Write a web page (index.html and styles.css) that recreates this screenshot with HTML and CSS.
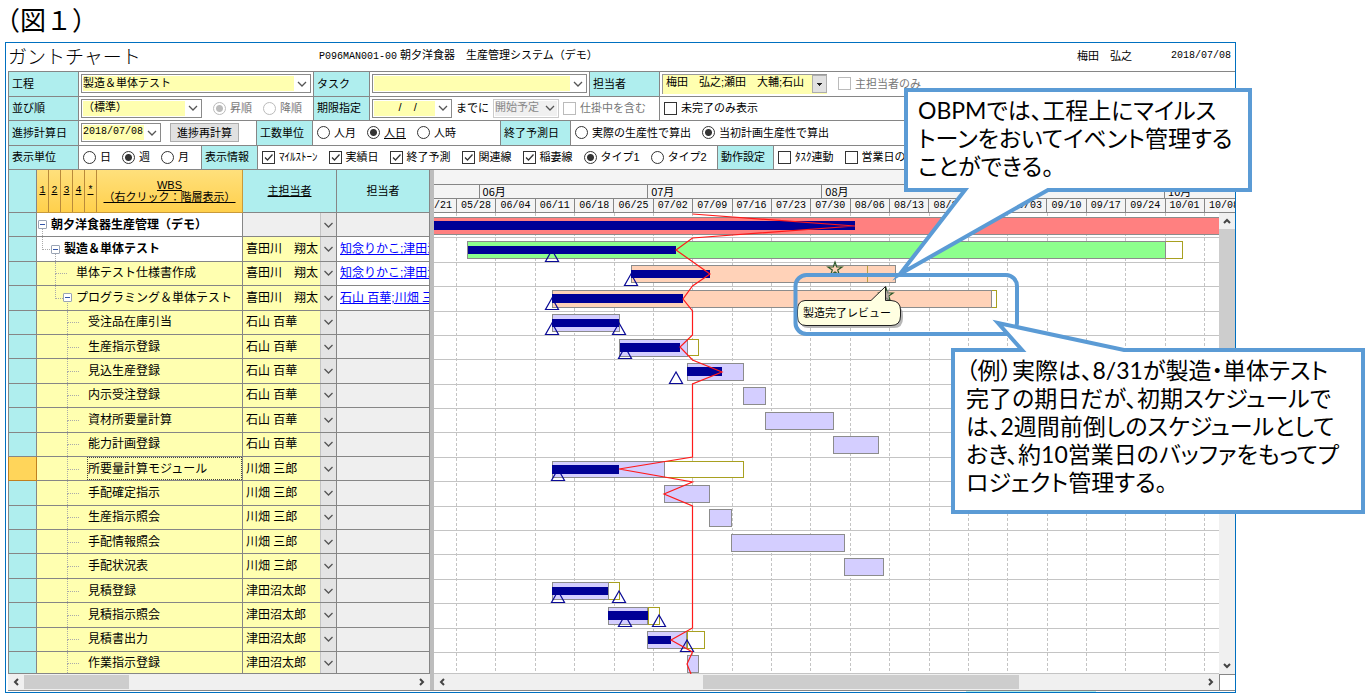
FILE: index.html
```html
<!DOCTYPE html>
<html lang="ja">
<head>
<meta charset="utf-8">
<title>ガントチャート</title>
<link rel="stylesheet" href="styles.css">
</head>
<body>
<h1 class="figure-title">（図１）</h1>
<main class="window">
  <header class="titlebar">
    <h2 class="screen-name">ガントチャート</h2>
    <p class="system"><span class="code">P096MAN001-00</span> 朝夕洋食器　生産管理システム（デモ）</p>
    <p class="user">梅田　弘之</p>
    <time class="today code">2018/07/08</time>
  </header>

  <form class="filters">
    <div class="frow">
      <label class="cap w-first" for="process">工程</label>
      <div class="cell w-process"><select id="process" class="combo grow"><option>製造＆単体テスト</option></select></div>
      <label class="cap w-mid" for="task">タスク</label>
      <div class="cell w-task"><select id="task" class="combo grow"><option></option></select></div>
      <label class="cap w-first" for="staff">担当者</label>
      <div class="cell last">
        <span class="staff"><input id="staff" type="text" value="梅田　弘之;瀬田　大輔;石山"><button type="button" class="drop" aria-label="担当者を選択"></button></span>
        <label class="opt off"><input type="checkbox" disabled>主担当者のみ</label>
      </div>
    </div>
    <div class="frow">
      <label class="cap w-first" for="order">並び順</label>
      <div class="cell w-process">
        <select id="order" class="combo w-order"><option>（標準）</option></select>
        <label class="opt off"><input type="radio" name="dir" checked disabled>昇順</label>
        <label class="opt off"><input type="radio" name="dir" disabled>降順</label>
      </div>
      <label class="cap w-mid" for="limit">期限指定</label>
      <div class="cell w-limit">
        <select id="limit" class="combo w-date"><option>&nbsp;&nbsp;&nbsp;&nbsp;&nbsp;&nbsp;&nbsp;&nbsp;/&nbsp;&nbsp;&nbsp;&nbsp;/</option></select>
        <span class="until">までに</span>
        <select class="combo disabled" aria-label="予定" disabled><option>開始予定</option></select>
        <label class="opt off"><input type="checkbox" disabled>仕掛中を含む</label>
      </div>
      <div class="cell last"><label class="opt"><input type="checkbox">未完了のみ表示</label></div>
    </div>
    <div class="frow">
      <label class="cap w-first" for="pdate">進捗計算日</label>
      <div class="cell w-pdate">
        <select id="pdate" class="combo w-date code"><option>2018/07/08</option></select>
        <button type="button" class="recalc">進捗再計算</button>
      </div>
      <span class="cap w-mid">工数単位</span>
      <div class="cell w-unit">
        <label class="opt"><input type="radio" name="unit">人月</label>
        <label class="opt"><input type="radio" name="unit" checked><u>人日</u></label>
        <label class="opt"><input type="radio" name="unit">人時</label>
      </div>
      <span class="cap w-first">終了予測日</span>
      <div class="cell last">
        <label class="opt"><input type="radio" name="fc">実際の生産性で算出</label>
        <label class="opt"><input type="radio" name="fc" checked>当初計画生産性で算出</label>
      </div>
    </div>
    <div class="frow">
      <span class="cap w-first">表示単位</span>
      <div class="cell w-scale">
        <label class="opt"><input type="radio" name="scale">日</label>
        <label class="opt"><input type="radio" name="scale" checked>週</label>
        <label class="opt"><input type="radio" name="scale">月</label>
      </div>
      <span class="cap w-mid">表示情報</span>
      <div class="cell w-info">
        <label class="opt"><input type="checkbox" checked>ﾏｲﾙｽﾄｰﾝ</label>
        <label class="opt"><input type="checkbox" checked>実績日</label>
        <label class="opt"><input type="checkbox" checked>終了予測</label>
        <label class="opt"><input type="checkbox" checked>関連線</label>
        <label class="opt"><input type="checkbox" checked>稲妻線</label>
        <label class="opt"><input type="radio" name="type" checked>タイプ1</label>
        <label class="opt"><input type="radio" name="type">タイプ2</label>
      </div>
      <span class="cap w-mid">動作設定</span>
      <div class="cell last">
        <label class="opt"><input type="checkbox">ﾀｽｸ連動</label>
        <label class="opt"><input type="checkbox">営業日のみ</label>
      </div>
    </div>
  </form>

  <div class="gantt">
    <section class="pane">
      <table class="wbs">
        <thead>
          <tr>
            <th></th>
            <th class="gold levels"><a href="#">1</a><a href="#">2</a><a href="#">3</a><a href="#">4</a><a href="#">*</a><a href="#" class="wide">WBS<br>（右クリック：階層表示）</a></th>
            <th><a href="#">主担当者</a></th>
            <th>担当者</th>
          </tr>
        </thead>
        <tbody>
          <tr class="root"><td></td><td class="name l0"><button class="toggle" aria-label="折りたたむ"></button>朝夕洋食器生産管理（デモ）</td><td class="owner none"><button class="pick" aria-label="選択"></button></td><td></td></tr>
          <tr class="root named"><td></td><td class="name l1"><button class="toggle" aria-label="折りたたむ"></button>製造＆単体テスト</td><td class="owner">喜田川　翔太<button class="pick" aria-label="選択"></button></td><td><a href="#">知念りかこ;津田沼</a></td></tr>
          <tr class="named"><td></td><td class="name l2">単体テスト仕様書作成</td><td class="owner">喜田川　翔太<button class="pick" aria-label="選択"></button></td><td><a href="#">知念りかこ;津田沼</a></td></tr>
          <tr class="named"><td></td><td class="name l2p"><button class="toggle" aria-label="折りたたむ"></button>プログラミング＆単体テスト</td><td class="owner">喜田川　翔太<button class="pick" aria-label="選択"></button></td><td><a href="#">石山 百華;川畑 三</a></td></tr>
          <tr><td></td><td class="name l3">受注品在庫引当</td><td class="owner">石山 百華<button class="pick" aria-label="選択"></button></td><td></td></tr>
          <tr><td></td><td class="name l3">生産指示登録</td><td class="owner">石山 百華<button class="pick" aria-label="選択"></button></td><td></td></tr>
          <tr><td></td><td class="name l3">見込生産登録</td><td class="owner">石山 百華<button class="pick" aria-label="選択"></button></td><td></td></tr>
          <tr><td></td><td class="name l3">内示受注登録</td><td class="owner">石山 百華<button class="pick" aria-label="選択"></button></td><td></td></tr>
          <tr><td></td><td class="name l3">資材所要量計算</td><td class="owner">石山 百華<button class="pick" aria-label="選択"></button></td><td></td></tr>
          <tr><td></td><td class="name l3">能力計画登録</td><td class="owner">石山 百華<button class="pick" aria-label="選択"></button></td><td></td></tr>
          <tr class="current"><td></td><td class="name l3"><span class="focus">所要量計算モジュール</span></td><td class="owner">川畑 三郎<button class="pick" aria-label="選択"></button></td><td></td></tr>
          <tr><td></td><td class="name l3">手配確定指示</td><td class="owner">川畑 三郎<button class="pick" aria-label="選択"></button></td><td></td></tr>
          <tr><td></td><td class="name l3">生産指示照会</td><td class="owner">川畑 三郎<button class="pick" aria-label="選択"></button></td><td></td></tr>
          <tr><td></td><td class="name l3">手配情報照会</td><td class="owner">川畑 三郎<button class="pick" aria-label="選択"></button></td><td></td></tr>
          <tr><td></td><td class="name l3">手配状況表</td><td class="owner">川畑 三郎<button class="pick" aria-label="選択"></button></td><td></td></tr>
          <tr><td></td><td class="name l3">見積登録</td><td class="owner">津田沼太郎<button class="pick" aria-label="選択"></button></td><td></td></tr>
          <tr><td></td><td class="name l3">見積指示照会</td><td class="owner">津田沼太郎<button class="pick" aria-label="選択"></button></td><td></td></tr>
          <tr><td></td><td class="name l3">見積書出力</td><td class="owner">津田沼太郎<button class="pick" aria-label="選択"></button></td><td></td></tr>
          <tr><td></td><td class="name l3">作業指示登録</td><td class="owner">津田沼太郎<button class="pick" aria-label="選択"></button></td><td></td></tr>
        </tbody>
      </table>
      <div class="hscroll">
        <svg class="arrow" viewBox="0 0 16 16"><path d="M10 5L7 8L10 11"/></svg>
        <div class="track"><div class="thumb thumb-left"></div></div>
        <svg class="arrow" viewBox="0 0 16 16"><path d="M6 5L9 8L6 11"/></svg>
      </div>
    </section>

    <section class="chart">
      <div class="timeline">
        <div class="blank"></div>
        <div class="months"><span></span><span>06月</span><span>07月</span><span>08月</span><span>09月</span><span>10月</span></div>
        <div class="weeks"><span class="first">/21</span><span>05/28</span><span>06/04</span><span>06/11</span><span>06/18</span><span>06/25</span><span>07/02</span><span>07/09</span><span>07/16</span><span>07/23</span><span>07/30</span><span>08/06</span><span>08/13</span><span>08/20</span><span>08/27</span><span>09/03</span><span>09/10</span><span>09/17</span><span>09/24</span><span>10/01</span><span>10/08</span></div>
      </div>
      <div class="plot">
        <svg class="bars" viewBox="434 212 785 461" preserveAspectRatio="none">
          <defs>
            <path id="tri" d="M0 12L-6.5 23.5H6.5Z" fill="none" stroke="#0a0a96" stroke-width="1.2"/>
            <path id="star" d="M0 -7L1.7 -2H7L2.7 1L4.4 6L0 3L-4.4 6L-2.7 1L-7 -2H-1.7Z" fill="none" stroke="#2c5a2c" stroke-width="1.2"/>
          </defs>
          <path class="week-lines" d="M456.5 212V673M495.5 212V673M535.5 212V673M574.5 212V673M614.5 212V673M653.5 212V673M692.5 212V673M732.5 212V673M771.5 212V673M810.5 212V673M850.5 212V673M889.5 212V673M929.5 212V673M968.5 212V673M1007.5 212V673M1047.5 212V673M1086.5 212V673M1125.5 212V673M1165.5 212V673M1204.5 212V673"/>
          <path class="row-lines" d="M434 236.5H1219M434 261.5H1219M434 285.5H1219M434 310.5H1219M434 334.5H1219M434 358.5H1219M434 383.5H1219M434 407.5H1219M434 431.5H1219M434 456.5H1219M434 480.5H1219M434 505.5H1219M434 529.5H1219M434 553.5H1219M434 578.5H1219M434 602.5H1219M434 627.5H1219M434 651.5H1219M434 672.5H1219"/>
          <g class="fc">
            <rect x="1165.5" y="240.5" width="17" height="17"/><rect x="991.5" y="289.5" width="5" height="17"/>
            <rect x="687.5" y="338.5" width="11" height="16"/><rect x="664.5" y="460.5" width="79" height="16"/>
            <rect x="608.5" y="581.5" width="11" height="17"/><rect x="648.5" y="606.5" width="11" height="17"/>
            <rect x="687.5" y="630.5" width="17" height="17"/>
          </g>
          <rect class="bar red" x="430.5" y="216.5" width="800" height="17"/>
          <rect class="bar green" x="467.5" y="240.5" width="698" height="17"/>
          <g class="bar peach"><rect x="631.5" y="264.5" width="264" height="17"/><rect x="552.5" y="289.5" width="439" height="17"/></g>
          <path d="M867.5 265V281" stroke="#b8a040"/>
          <g class="bar lav">
            <rect x="552.5" y="313.5" width="67" height="17"/><rect x="619.5" y="338.5" width="68" height="17"/>
            <rect x="687.5" y="362.5" width="56" height="17"/><rect x="743.5" y="386.5" width="22" height="17"/>
            <rect x="765.5" y="411.5" width="68" height="17"/><rect x="833.5" y="435.5" width="45" height="17"/>
            <rect x="552.5" y="460.5" width="112" height="16"/><rect x="664.5" y="484.5" width="45" height="17"/>
            <rect x="709.5" y="508.5" width="22" height="17"/><rect x="731.5" y="533.5" width="113" height="17"/>
            <rect x="844.5" y="557.5" width="39" height="17"/><rect x="552.5" y="581.5" width="56" height="17"/>
            <rect x="608.5" y="606.5" width="39" height="17"/><rect x="647.5" y="630.5" width="39" height="17"/>
            <rect x="687.5" y="654.5" width="11" height="17"/>
          </g>
          <g>
            <use href="#tri" x="552" y="237"/><use href="#tri" x="631" y="261"/><use href="#tri" x="552" y="285"/>
            <use href="#tri" x="552" y="310"/><use href="#tri" x="619" y="310"/><use href="#tri" x="625" y="334"/>
            <use href="#tri" x="676" y="359"/><use href="#tri" x="558" y="456"/><use href="#tri" x="558" y="578"/>
            <use href="#tri" x="619" y="578"/><use href="#tri" x="625" y="602"/><use href="#tri" x="659" y="602"/>
            <use href="#tri" x="687" y="627"/>
          </g>
          <g class="done">
            <rect x="434" y="220" width="421" height="9"/><rect x="468" y="245" width="208" height="8"/>
            <rect x="631" y="269" width="79" height="8"/><rect x="552" y="293" width="131" height="9"/>
            <rect x="552" y="318" width="67" height="8"/><rect x="620" y="342" width="60" height="9"/>
            <rect x="687" y="366" width="35" height="9"/><rect x="552" y="464" width="67" height="9"/>
            <rect x="552" y="586" width="56" height="8"/><rect x="608" y="610" width="40" height="9"/>
            <rect x="648" y="635" width="23" height="8"/>
          </g>
          <use href="#star" x="835" y="268"/><use href="#star" x="886" y="294"/>
          <path class="lightning" d="M692.5 213L855 225L692.5 237L676 249L710 273L692.5 285L683 298L692.5 310V334L680 346L692.5 359L722 371L692.5 383V456L619 468L692.5 481L664 493L692.5 505V627L671 639L692.5 651L687 663L691 673"/>
        </svg>
        <div class="vscroll">
          <svg class="arrow" viewBox="0 0 16 16"><path d="M5 10L8 7L11 10"/></svg>
          <div class="vtrack"><div class="vthumb"></div></div>
          <svg class="arrow" viewBox="0 0 16 16"><path d="M5 6L8 9L11 6"/></svg>
        </div>
      </div>
      <div class="hscroll">
        <svg class="arrow" viewBox="0 0 16 16"><path d="M10 5L7 8L10 11"/></svg>
        <div class="track"><div class="thumb thumb-right"></div></div>
        <svg class="arrow" viewBox="0 0 16 16"><path d="M6 5L9 8L6 11"/></svg>
        <div class="corner"></div>
      </div>
    </section>
  </div>
  <div class="status"><span></span></div>
</main>

<div class="notes">
  <svg class="shapes" width="1365" height="694" viewBox="0 0 1365 694">
    <path d="M807 303.500H872L888 288V303.500H892Q902 304 902 314V317Q902 327 893 327H807Q799 327 799 317V312Q799 304 807 303.500Z" fill="#999" opacity=".7" transform="translate(1 1)"/>
    <path d="M805 300.500H871L885.500 286.500V300.500H891Q900.500 301 900.500 310V316Q900.500 325.500 891 325.500H806Q797.500 325.500 797.500 316V310Q797.500 301 805 300.500Z" fill="#ffffe1" stroke="#222"/>
    <g stroke="#5b9bd5" stroke-width="4" stroke-miterlimit="12">
      <rect x="795.500" y="275" width="221.500" height="59" rx="11" fill="none"/>
      <path d="M906 90H1250V190H1048L900 274L965 190H906Z" fill="#fff"/>
      <path d="M953 350H1022L998 323L1124 350H1363V512H953Z" fill="#fff"/>
    </g>
  </svg>
  <p class="tip">製造完了レビュー</p>
  <p class="note note-a">OBPMでは、工程上にマイルス<br>トーンをおいてイベント管理する<br>ことができる。</p>
  <p class="note note-b">（例）実際は、8/31が製造・単体テスト<br>完了の期日だが、初期スケジュールで<br>は、2週間前倒しのスケジュールとして<br>おき、約10営業日のバッファをもってプ<br>ロジェクト管理する。</p>
</div>
</body>
</html>
```
FILE: styles.css
```css
* { box-sizing: border-box; }

:root {
  --line: #868686;
  --cyan: #afeeee;
  --yellow: #ffffb0;
  --jp: "Noto Sans CJK JP", sans-serif;
  --chevron: url("data:image/svg+xml,%3Csvg xmlns='http://www.w3.org/2000/svg' width='16' height='16'%3E%3Cpath d='M4 6L8 10L12 6' fill='none' stroke='%23555' stroke-width='1.3'/%3E%3C/svg%3E");
}

body {
  margin: 0;
  height: 100vh;
  min-height: 600px;
  display: flex;
  flex-direction: column;
  position: relative;
  background: #fff;
  color: #000;
  font-family: "Liberation Sans", var(--jp);
  font-size: 11px;
  line-height: 16px;
}

h1, h2, p { margin: 0; font-weight: 400; }
a { color: inherit; }
button, input, select { font: inherit; color: inherit; margin: 0; padding: 0; border-radius: 0; }
.code { font-family: "Liberation Mono", monospace; font-size: 10px; }

.figure-title {
  height: 42px;
  flex: none;
  padding-left: 7px;
  font: 26px/38px var(--jp);
  font-feature-settings: "halt";
}

.window {
  flex: 1;
  min-height: 0;
  display: flex;
  flex-direction: column;
  margin: 0 129px 1px 5px;
  padding-left: 2px;
  border: 1px solid #0070c0;
}

/* title bar */
.titlebar { height: 28px; flex: none; display: flex; align-items: center; padding: 0 4px 3px 0; }
.screen-name { width: 311px; font: 300 19px/22px var(--jp); }
.system { flex: 1; }
.user { width: 94px; }
.today { width: 60px; }

/* filter form */
.filters { height: 98px; flex: none; display: grid; grid-template-rows: repeat(4, 1fr); border-left: 1px solid var(--line); }
.frow { display: flex; min-height: 0; border-top: 1px solid var(--line); white-space: nowrap; }
.cap { flex: none; display: flex; align-items: center; padding-left: 3px; background: var(--cyan); border-right: 1px solid var(--line); }
.cell { flex: none; display: flex; align-items: center; gap: 11px; padding: 0 2px 0 4px; border-right: 1px solid var(--line); overflow: hidden; }
.cell:has(> .combo:first-child), .cell:has(> .staff) { padding-left: 2px; }
.cell.last { flex: 1; border-right: 0; }
.w-first { width: 70px; }
.w-mid { width: 56px; }
.w-process { width: 235px; }
.w-task { width: 220px; }
.w-limit { width: 290px; gap: 4px; }
.w-pdate { width: 178px; gap: 9px; }
.w-unit { width: 188px; }
.w-scale { width: 123px; }
.w-info { width: 460px; }

.opt { display: flex; align-items: center; gap: 4px; }
.opt.off { color: #777; }
.opt input { appearance: none; width: 13px; height: 13px; border: 1px solid #333; background: #fff; flex: none; }
.opt input[type="radio"] { border-radius: 50%; }
.opt input[type="radio"]:checked { background: radial-gradient(circle, #333 0 3px, #fff 4px); }
.opt input[type="checkbox"]:checked {
  background: url("data:image/svg+xml,%3Csvg xmlns='http://www.w3.org/2000/svg' width='11' height='11'%3E%3Cpath d='M2 5.500L4.500 8L9.500 2.500' fill='none' stroke='%23333' stroke-width='1.300'/%3E%3C/svg%3E") center no-repeat;
}
.opt input:disabled { border-color: #bbb; }
.opt input[type="radio"]:disabled:checked { background: radial-gradient(circle, #bbb 0 3px, #fff 4px); }

.combo {
  appearance: none;
  height: 19px;
  padding: 0 16px 2px 1px;
  line-height: 14px;
  border: 1px solid #8a8a8a;
  background: var(--chevron) right 0 center no-repeat, linear-gradient(90deg, transparent calc(100% - 16px), #fff 0), var(--yellow);
  box-shadow: inset 0 0 0 1px #fff;
}
.combo.grow { width: 100%; }
.w-order { width: 121px; }
.w-date { width: 80px; }
.combo.disabled { width: 66px; color: #888; border-color: #ccc; background: var(--chevron) right 0 center no-repeat, #f0f0f0; opacity: 1; }
.recalc { width: 69px; height: 19px; line-height: 16px; background: #e1e1e1; border: 1px solid #adadad; }
.staff { display: flex; width: 165px; height: 20px; background: var(--yellow); border-top: 1px solid #999; border-left: 1px solid #999; }
.staff input { flex: 1; min-width: 0; padding-left: 3px; height: 15px; border: 0; background: transparent; }
.drop { width: 15px; height: 18px; border: 1px solid #adadad; background: linear-gradient(#222, #222) 4px 7px / 5px 1px no-repeat, linear-gradient(#222, #222) 5px 8px / 3px 1px no-repeat, linear-gradient(#222, #222) 6px 9px / 1px 1px no-repeat, #e1e1e1; }

/* gantt */
.gantt { flex: 1; min-height: 0; display: flex; border-top: 1px solid var(--line); }
.pane { width: 426px; flex: none; display: flex; flex-direction: column; border-right: 4px solid #bdbdbd; }
.wbs { flex: 1; min-height: 0; display: flex; flex-direction: column; }
.wbs thead { display: block; height: 43px; flex: none; }
.wbs tr { display: grid; grid-template-columns: 29px 206px 94px 93px; min-height: 0; overflow: hidden; }
.wbs thead tr { height: 43px; }
.wbs tbody { flex: 1; min-height: 0; display: grid; grid-template-rows: repeat(18, 10fr) 9fr; font-size: 12px; }
.wbs th { display: flex; align-items: center; justify-content: center; padding: 0; font-weight: 400; background: var(--cyan); border: solid var(--line); border-width: 0 1px 1px 0; }
.wbs th:first-child, .wbs td:first-child { border-left: 1px solid var(--line); }
.wbs .levels { align-items: stretch; background: linear-gradient(#ffe07c, #ffd04c); border-color: #c99a3a; }
.levels a { width: 12px; flex: none; display: flex; align-items: center; justify-content: center; border-right: 1px solid #b98a3a; font: 10px/12px "Liberation Mono", monospace; }
.levels .wide { flex: 1; display: block; padding-top: 9px; border: 0; text-align: center; font-size: 11px; font-family: "Liberation Sans", var(--jp); white-space: nowrap; }

.wbs td { display: flex; align-items: center; position: relative; min-width: 0; padding: 0; border: solid var(--line); border-width: 0 1px 1px 0; background: #efefef; white-space: nowrap; overflow: hidden; line-height: 18px; }
.wbs td:first-child { background: var(--cyan); }
.wbs .name, .wbs .owner { background: var(--yellow); }
.wbs .owner { padding-left: 3px; }
.wbs .owner.none { background: #efefef; }
.wbs .root .name { background: #fff; font-weight: 700; }
.wbs .named td:last-child { background: #fff; padding-left: 3px; }
.named td:last-child a { color: #00f; }
.wbs .current td:first-child { background: #ffd55a; border-color: #c08020; }
.pick { width: 16px; align-self: stretch; margin-left: auto; border: 1px solid #c4c4c4; border-width: 0 0 0 1px; background: var(--chevron) center no-repeat, #e4e4e4; }
.toggle { width: 9px; height: 9px; margin-right: 4px; flex: none; position: relative; z-index: 1; border: 1px solid #9aa4b4; border-radius: 1px; background: linear-gradient(#3355aa, #3355aa) center / 5px 1px no-repeat, #fff; }
.focus { flex: 1; align-self: stretch; display: flex; align-items: center; margin-left: -1px; border: 1px dotted #444; }

/* tree connectors */
.wbs .l0 { padding-left: 1px; }
.wbs .l1 { padding-left: 14px; }
.wbs .l2p { padding-left: 26px; }
.wbs .l2 { padding-left: 39px; }
.wbs .l3 { padding-left: 51px; }
.name::before { content: ""; position: absolute; top: 0; height: 50%; width: 11px; border: dotted #aaa; border-width: 0 0 1px 1px; }
.name::after { content: ""; position: absolute; top: 50%; bottom: 0; border-left: 1px dotted #aaa; }
.l0::before { display: none; }
.l0::after, .l1::before { left: 5px; }
.l1::after, .l2::before, .l2::after, .l2p::before { left: 18px; }
.l2p::after, .l3::before, .l3::after { left: 30px; }

/* chart */
.chart { flex: 1; min-width: 0; display: flex; flex-direction: column; }
.timeline { height: 43px; flex: none; background: #f4f4f4; overflow: hidden; border-bottom: 1px solid var(--line); }
.blank { height: 14px; }
.months, .weeks { display: grid; height: 14px; border-top: 1px solid var(--line); }
.months { grid-template-columns: 446fr 1688fr 1744fr 1744fr 1688fr 710fr; font: 11px/13px var(--jp); }
.months span { min-width: 0; padding-left: 3px; border-left: 1px solid var(--line); }
.months span:first-child, .weeks span:first-child { border-left: 0; }
.weeks { grid-template-columns: 56fr repeat(19, 100fr) 79fr; font: 10px/13px "Liberation Mono", monospace; }
.weeks span { min-width: 0; padding-left: 4px; border-left: 1px solid var(--line); overflow: hidden; }
.weeks .first { padding-left: 0; }
.plot { flex: 1; min-height: 0; display: flex; }
.bars { flex: 1; min-width: 0; height: 100%; }
.week-lines { fill: none; stroke: #c4c4c4; stroke-dasharray: 3 2; }
.row-lines { fill: none; stroke: #c4c4c4; }
.bar, .fc { stroke: #8c8c8c; }
.fc { fill: #fff; stroke: #a8a020; }
.red { fill: #ff8080; }
.green { fill: #8dff8d; }
.peach { fill: #ffd2b8; }
.lav { fill: #d4ceff; }
.done { fill: #000096; }
.lightning { fill: none; stroke: #ff1a1a; stroke-width: 1.2; }

/* scroll bars */
.arrow { width: 16px; height: 16px; flex: none; fill: none; stroke: #444; stroke-width: 2; }
.vscroll { width: 16px; flex: none; display: flex; flex-direction: column; background: #f0f0f0; }
.vtrack { flex: 1; }
.vthumb { height: 60%; background: #cdcdcd; }
.hscroll { height: 16px; flex: none; display: flex; background: #f0f0f0; }
.track { flex: 1; padding: 1px 0; }
.thumb { height: 14px; background: #cdcdcd; }
.thumb-left { width: 27%; }
.thumb-right { width: 42%; margin-left: 33.6%; }
.corner { width: 16px; border: solid var(--line); border-width: 1px 0 0 1px; background: #fff; }
.status { height: 2px; flex: none; display: flex; justify-content: flex-end; padding-right: 139px; border-top: 1px solid var(--line); }
.status span { width: 130px; background: var(--cyan); }

/* annotations laid over the screen */
.notes { position: absolute; left: 0; top: 0; pointer-events: none; }
.shapes { display: block; }
.tip { position: absolute; left: 803px; top: 305px; white-space: nowrap; }
.note { position: absolute; white-space: nowrap; font: 23px/28px Lato, var(--jp); font-feature-settings: "palt"; }
.note-a { left: 918px; top: 96px; }
.note-b { left: 966px; top: 356px; }
```
